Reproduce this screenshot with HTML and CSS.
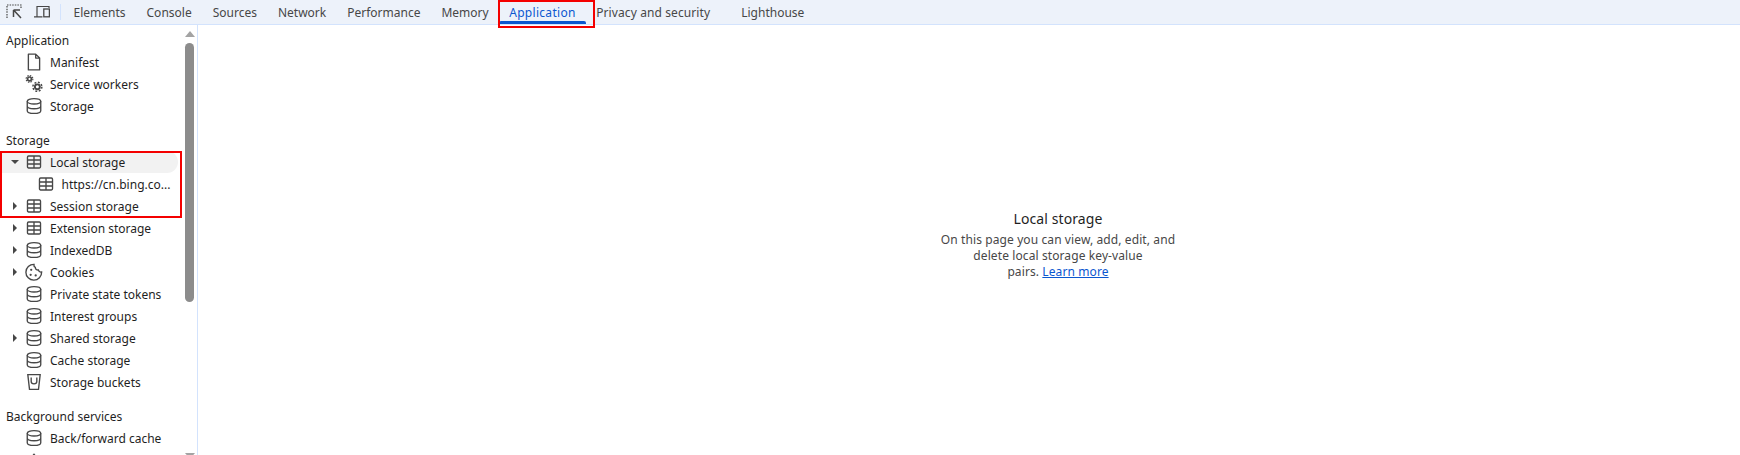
FILE: index.html
```html
<!DOCTYPE html>
<html lang="en">
<head>
<meta charset="utf-8">
<title>Application</title>
<link rel="stylesheet" href="styles.css">
</head>
<body>
<svg class="defs" width="0" height="0">
  <defs>
    <symbol id="db" viewBox="0 0 16 16"><g fill="none" stroke="#474747" stroke-width="1.2"><ellipse cx="8" cy="3.8" rx="6" ry="2.4"/><path d="M2 3.8v8.400c0 1.400 2.700 2.400 6 2.400s6-1 6-2.400V3.800M2 8c0 1.400 2.700 2.400 6 2.400s6-1 6-2.400"/></g></symbol>
    <symbol id="table" viewBox="0 0 16 16"><g fill="none" stroke="#474747" stroke-width="1.2"><rect x="2.2" y="2.7" width="11.6" height="10.600" rx="1"/><path d="M2.200 6.200h11.600M2.200 9.800h11.600M8 2.700v10.600"/></g></symbol>
    <symbol id="right" viewBox="0 0 8 10"><path d="M2 1l4 4-4 4z" fill="#474747"/></symbol>
    <symbol id="down" viewBox="0 0 10 8"><path d="M1 2h8L5 6z" fill="#474747"/></symbol>
  </defs>
</svg>
<div class="app">
  <header class="toolbar">
    <div class="tool-icons">
      <svg class="tool-icon" viewBox="0 0 16 16"><path d="M1 14V1h14v3" fill="none" stroke="#474747" stroke-width="1.200" stroke-dasharray="1.500 1.100"/><path d="M7.500 6H14M7.500 6v7M7.800 6.300L15 14" fill="none" stroke="#474747" stroke-width="1.500"/></svg>
      <svg class="tool-icon" viewBox="0 0 16 16"><path d="M3 12.500V2.500h12V4M0 12.800h8.500" fill="none" stroke="#474747" stroke-width="1.200"/><rect x="9.800" y="5" width="5.600" height="7.800" fill="none" stroke="#474747" stroke-width="1.300"/></svg>
      <span class="tool-sep"></span>
    </div>
    <nav class="tabs">
      <span class="tab">Elements</span>
      <span class="tab">Console</span>
      <span class="tab">Sources</span>
      <span class="tab">Network</span>
      <span class="tab">Performance</span>
      <span class="tab">Memory</span>
      <span class="tab tab-active">Application</span>
      <span class="tab tab-privacy">Privacy and security</span>
      <span class="tab">Lighthouse</span>
    </nav>
    <span class="mark mark-tab"></span>
  </header>
  <main class="main">
    <aside class="sidebar">
      <div class="tree">
        <div class="section">Application</div>
        <div class="row"><span class="arrow"></span><svg class="ico" viewBox="0 0 16 16"><path d="M3 1h6.500L13 4.500V15H3z M9.500 1v3.500H13" fill="none" stroke="#474747" stroke-width="1.200" stroke-linejoin="round"/></svg><span>Manifest</span></div>
        <div class="row"><span class="arrow"></span><svg class="ico" viewBox="0 0 16 16"><g fill="none" stroke="#474747"><circle cx="4" cy="3.500" r="1.700" stroke-width="1.500"/><circle cx="4" cy="3.500" r="3" stroke-width="1" stroke-dasharray="1.300 1.050"/><circle cx="11" cy="10.500" r="2.200" stroke-width="1.700"/><circle cx="11" cy="10.500" r="4" stroke-width="1.300" stroke-dasharray="1.700 1.440"/></g></svg><span>Service workers</span></div>
        <div class="row"><span class="arrow"></span><svg class="ico"><use href="#db"/></svg><span>Storage</span></div>
        <div class="section section-gap">Storage</div>
        <div class="row row-selected"><span class="arrow"><svg class="arrow-svg" viewBox="0 0 10 8"><use href="#down"/></svg></span><svg class="ico"><use href="#table"/></svg><span>Local storage</span></div>
        <div class="row row-child"><svg class="ico"><use href="#table"/></svg><span>https://cn.bing.co...</span></div>
        <div class="row"><span class="arrow"><svg class="arrow-svg" viewBox="0 0 8 10"><use href="#right"/></svg></span><svg class="ico"><use href="#table"/></svg><span>Session storage</span></div>
        <div class="row"><span class="arrow"><svg class="arrow-svg" viewBox="0 0 8 10"><use href="#right"/></svg></span><svg class="ico"><use href="#table"/></svg><span>Extension storage</span></div>
        <div class="row"><span class="arrow"><svg class="arrow-svg" viewBox="0 0 8 10"><use href="#right"/></svg></span><svg class="ico"><use href="#db"/></svg><span>IndexedDB</span></div>
        <div class="row"><span class="arrow"><svg class="arrow-svg" viewBox="0 0 8 10"><use href="#right"/></svg></span><svg class="ico" viewBox="0 0 16 16"><path d="M8 1.200a7 7 0 1 0 6.800 6.800c-1.500.3-2.600-.4-2.900-1.800-1.500.2-2.700-.8-2.700-2.300C8.200 3.500 7.800 2.400 8 1.200z" fill="none" stroke="#474747" stroke-width="1.200"/><circle cx="5.500" cy="6" r="1" fill="#474747"/><circle cx="5" cy="10.500" r="1" fill="#474747"/><circle cx="9.500" cy="11" r="1" fill="#474747"/></svg><span>Cookies</span></div>
        <div class="row"><span class="arrow"></span><svg class="ico"><use href="#db"/></svg><span>Private state tokens</span></div>
        <div class="row"><span class="arrow"></span><svg class="ico"><use href="#db"/></svg><span>Interest groups</span></div>
        <div class="row"><span class="arrow"><svg class="arrow-svg" viewBox="0 0 8 10"><use href="#right"/></svg></span><svg class="ico"><use href="#db"/></svg><span>Shared storage</span></div>
        <div class="row"><span class="arrow"></span><svg class="ico"><use href="#db"/></svg><span>Cache storage</span></div>
        <div class="row"><span class="arrow"></span><svg class="ico" viewBox="0 0 16 16"><path d="M2.500 1.500h11L12 14.500H4zM5.500 4v3.500c0 2.800 5 2.800 5 0V4" fill="none" stroke="#474747" stroke-width="1.200"/></svg><span>Storage buckets</span></div>
        <div class="section section-gap">Background services</div>
        <div class="row"><span class="arrow"></span><svg class="ico"><use href="#db"/></svg><span>Back/forward cache</span></div>
        <div class="row"><span class="arrow"></span><svg class="ico" viewBox="0 0 16 16"><path d="M8 2l-5 6h3v6h4V8h3z" fill="#474747"/></svg></div>
      </div>
      <div class="scrollbar">
        <svg class="sb-arrow" viewBox="0 0 10 6"><path d="M5 0l5 6H0z" fill="#a3a3a3"/></svg>
        <div class="sb-thumb"></div>
        <svg class="sb-arrow sb-arrow-down" viewBox="0 0 10 6"><path d="M0 0h10L5 6z" fill="#a3a3a3"/></svg>
      </div>
      <span class="mark mark-tree"></span>
    </aside>
    <section class="content">
      <h1 class="title">Local storage</h1>
      <p class="desc">On this page you can view, add, edit, and<br>delete local storage key-value<br>pairs. <a class="link" href="#">Learn more</a></p>
    </section>
  </main>
</div>
</body>
</html>
```
FILE: styles.css
```css
* { box-sizing: border-box; }
html, body { margin: 0; height: 100%; background: #fff; overflow: hidden; }
body { font-family: "Noto Sans", sans-serif; font-size: 12px; color: #1f1f1f; }
.defs { position: absolute; }
.app { height: 455px; display: flex; flex-direction: column; }
.toolbar { position: relative; height: 25px; flex: none; display: flex; align-items: center; background: #edf2fa; border-bottom: 1px solid #d3e3fd; }
.tool-icons { display: flex; align-items: center; width: 63px; flex: none; padding-left: 6px; gap: 12px; }
.tool-icon { width: 16px; height: 16px; flex: none; }
.tool-sep { width: 1px; height: 16px; background: #d3e3fd; margin-left: -2px; }
.tabs { display: flex; align-self: stretch; }
.tab { display: flex; align-items: center; padding: 0 10.5px; color: #474747; white-space: nowrap; height: 24px; }
.tab-active { position: relative; color: #0b57d0; padding: 0 10px; letter-spacing: .3px; }
.tab-active::after { content: ""; position: absolute; left: 0; right: 0; bottom: 0; height: 3px; background: #0b57d0; border-radius: 2px 2px 0 0; }
.tab-privacy { margin-right: 10px; letter-spacing: .1px; }
.mark { position: absolute; border: 2px solid #f40000; pointer-events: none; }
.mark-tab { left: 498px; top: 0; width: 97px; height: 28px; }
.main { flex: 1; display: flex; min-height: 0; }
.sidebar { position: relative; width: 198px; flex: none; display: flex; border-right: 1px solid #d3e3fd; overflow: hidden; }
.tree { flex: 1; min-width: 0; padding-top: 4px; }
.section { height: 22px; line-height: 24px; padding-left: 6px; }
.section-gap { margin-top: 12px; }
.row { height: 22px; display: flex; align-items: center; color: #1f1f1f; white-space: nowrap; border-radius: 0 11px 11px 0; }
.row-selected { background: #f2f2f2; width: 178px; }
.row-child { padding-left: 36.5px; }
.arrow { width: 25px; flex: none; display: flex; justify-content: center; padding-left: 4px; }
.arrow-svg { width: 10px; height: 10px; }
.ico { width: 18px; height: 18px; flex: none; margin-right: 7px; }
.scrollbar { width: 15px; flex: none; display: flex; flex-direction: column; align-items: center; padding-top: 6px; margin-bottom: -4px; }
.sb-arrow { width: 10px; height: 6px; flex: none; }
.sb-thumb { width: 9px; height: 259px; margin-top: 6px; background: #8c8c8c; border-radius: 5px; }
.sb-arrow-down { margin-top: auto; }
.mark-tree { left: 0; top: 126px; width: 182px; height: 67px; }
.content { flex: 1; display: flex; flex-direction: column; align-items: center; padding: 184px 0 0 178px; text-align: center; }
.title { margin: 0; font-size: 14px; font-weight: 400; line-height: 20px; color: #1f1f1f; letter-spacing: .1px; }
.desc { margin: 3px 0 0; font-size: 12px; line-height: 16px; color: #474747; letter-spacing: .1px; }
.link { color: #0b57d0; }
```
